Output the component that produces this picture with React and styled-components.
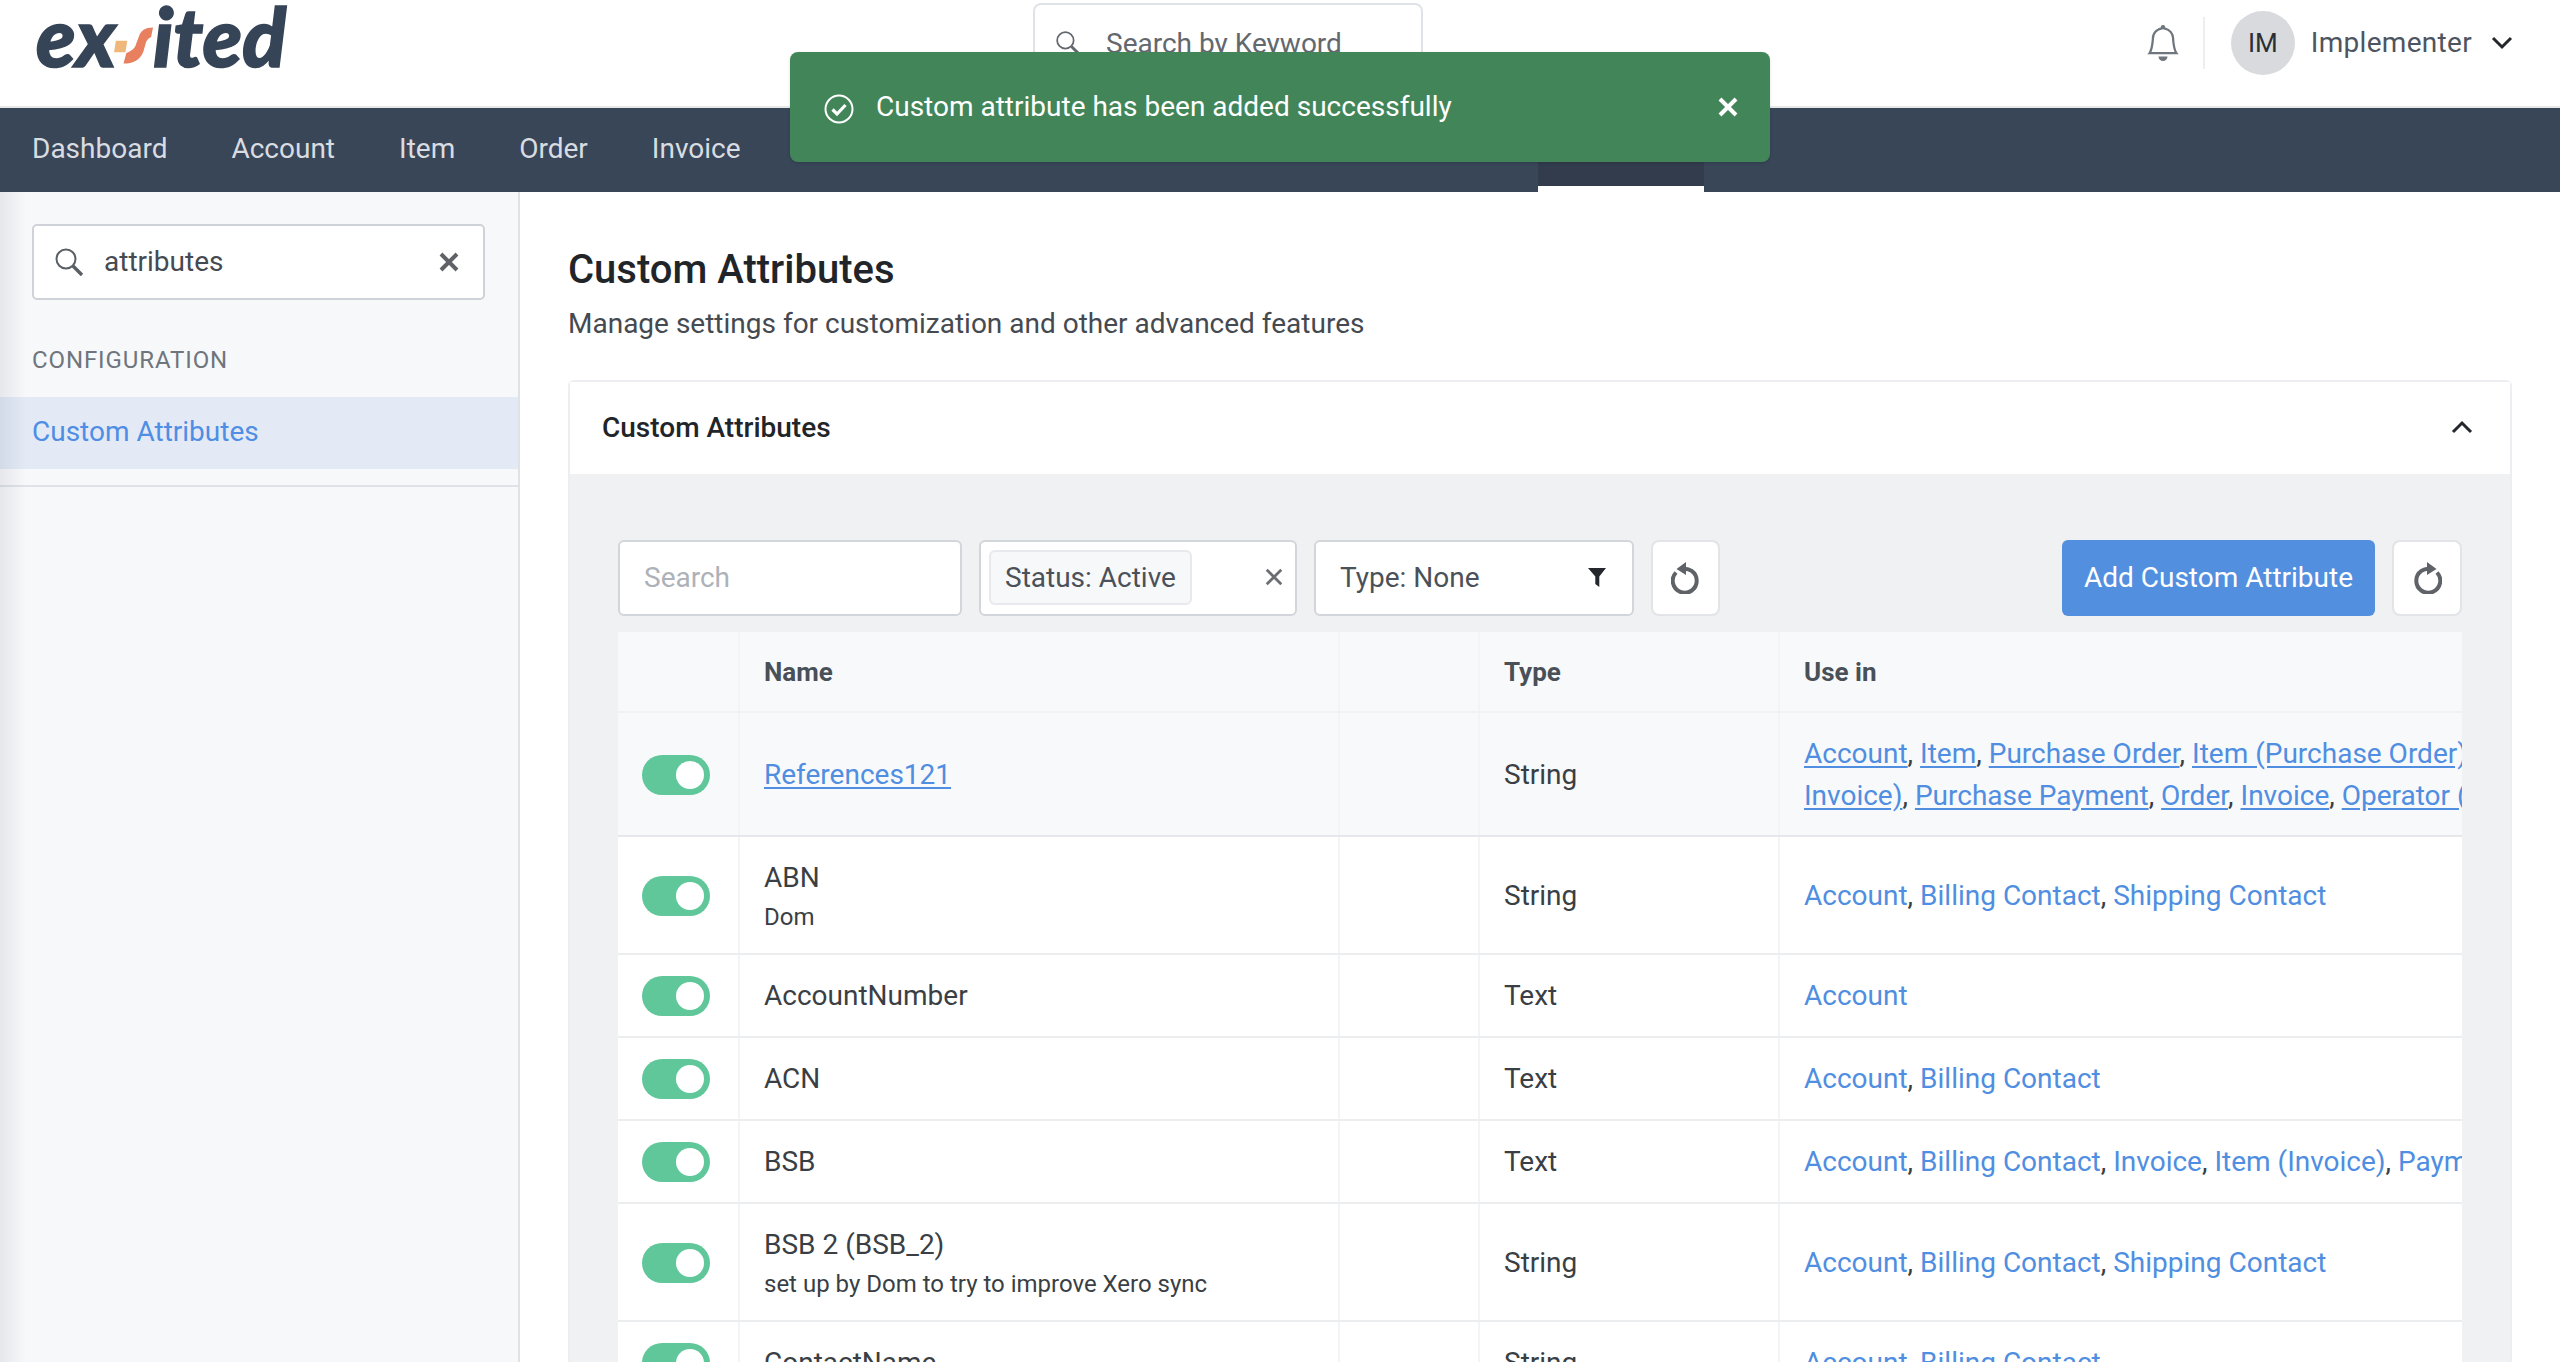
import styled, { createGlobalStyle } from 'styled-components';
import { BsBell } from 'react-icons/bs';

const GlobalStyle = createGlobalStyle`
    html, body {
        margin: 0;
        height: 1362px;
        overflow: hidden;
        background: #fff;
        font-family: Roboto, "Liberation Sans", sans-serif;
        color: #212529;
    }
    * { box-sizing: border-box; }
`;

const Page = styled.div`
    position: relative;
    width: 2560px;
    height: 1362px;
    overflow: hidden;
`;

const Header = styled.header`
    height: 108px;
    display: flex;
    align-items: flex-start;
    border-bottom: 2px solid #e7e8ea;
    padding-left: 36px;
`;

const Logo = styled.div`
    display: flex;
    align-items: flex-start;
    height: 70px;
    width: 252px;
    flex: none;
    padding-top: 1px;
`;

const LogoWord = styled.span`
    font-family: Lato, sans-serif;
    font-weight: 900;
    font-style: italic;
    font-size: 81px;
    line-height: 70px;
    height: 70px;
    color: #364457;
    -webkit-text-stroke: 1.5px #364457;
`;

const KeywordSearch = styled.div`
    margin: 3px 0 0 745px;
    width: 390px;
    height: 80px;
    flex: none;
    display: flex;
    align-items: center;
    gap: 25px;
    padding-left: 20px;
    border: 2px solid #dfe2e6;
    border-radius: 8px;
    font-size: 28px;
    color: #63686f;
`;

const UserArea = styled.div`
    margin-left: auto;
    display: flex;
    align-items: center;
    height: 85px;
    color: #6f767e;
`;

const BellIcon = styled(BsBell)`
    font-size: 36px;
    margin-right: 22px;
`;

const UserDivider = styled.div`
    width: 2px;
    height: 52px;
    background: #eceef0;
    margin-right: 26px;
`;

const Avatar = styled.div`
    width: 64px;
    height: 64px;
    border-radius: 50%;
    background: #d8dade;
    color: #2b2f36;
    font-size: 26px;
    display: flex;
    align-items: center;
    justify-content: center;
    margin-right: 16px;
`;

const UserName = styled.span`
    font-size: 28px;
    color: #4e5560;
    letter-spacing: 0.3px;
    margin-right: 19px;
`;

const UserCaret = styled.svg`
    width: 22px;
    height: 14px;
    margin-right: 47px;
`;

const NavBar = styled.nav`
    height: 84px;
    background: #384658;
    display: flex;
    align-items: stretch;
`;

const NavItem = styled.div`
    padding: 0 32px 3px;
    display: flex;
    align-items: center;
    font-size: 28px;
    color: #d9dce1;
`;

const ActiveTab = styled.div`
    width: 166px;
    margin-left: 765px;
    height: 84px;
    background: #323c4c;
    border-bottom: 6px solid #fff;
`;

const Toast = styled.div`
    position: absolute;
    left: 790px;
    top: 52px;
    width: 980px;
    height: 110px;
    border-radius: 8px;
    background: #428558;
    color: #fff;
    display: flex;
    align-items: center;
    padding: 0 31px 0 34px;
    font-size: 28px;
    box-shadow: 0 1px 3px rgba(0, 0, 0, 0.15);
`;

const ToastMessage = styled.span`
    flex: 1;
    margin-left: 22px;
    padding-bottom: 2px;
`;

const Body = styled.div`
    display: flex;
    height: 1170px;
`;

const Sidebar = styled.aside`
    position: relative;
    width: 520px;
    flex: none;
    background: #f7f8fa;
    border-right: 2px solid #dfe2e7;
    padding-top: 32px;

    &::after {
        content: '';
        position: absolute;
        left: 0;
        top: 0;
        bottom: 0;
        width: 26px;
        background: linear-gradient(to right, rgba(70, 80, 100, 0.1), rgba(70, 80, 100, 0));
        pointer-events: none;
    }
`;

const SideSearch = styled.div`
    margin: 0 33px 0 32px;
    height: 76px;
    background: #fff;
    border: 2px solid #cfd3d9;
    border-radius: 5px;
    display: flex;
    align-items: center;
    padding: 0 23px 0 20px;
    gap: 20px;
    font-size: 28px;
    color: #454a50;
`;

const SideSearchText = styled.span`
    flex: 1;
    padding-bottom: 1px;
`;

const SideHeading = styled.div`
    margin: 42px 33px 0 32px;
    height: 36px;
    line-height: 36px;
    font-size: 24px;
    color: #6e757d;
    letter-spacing: 0.9px;
`;

const SideLink = styled.div`
    margin-top: 19px;
    height: 72px;
    background: #e3eaf6;
    padding: 0 0 3px 32px;
    display: flex;
    align-items: center;
    font-size: 28px;
    color: #4f8ee4;
`;

const SideRule = styled.div`
    margin-top: 16px;
    height: 2px;
    background: #dfe2e8;
`;

const Main = styled.main`
    flex: 1;
    min-width: 0;
    padding: 51px 48px 0 48px;
`;

const Title = styled.h1`
    margin: 0;
    font-size: 40px;
    line-height: 54px;
    font-weight: 500;
    color: #212529;
`;

const Subtitle = styled.p`
    margin: 4px 0 0;
    font-size: 28px;
    line-height: 46px;
    color: #454a50;
`;

const Card = styled.section`
    margin-top: 33px;
    border: 2px solid #eceef1;
    border-radius: 6px 6px 0 0;
    background: #f0f1f3;
    height: 1000px;
`;

const CardHead = styled.div`
    height: 92px;
    padding: 0 37px 2px 32px;
    background: #fff;
    display: flex;
    align-items: center;
    justify-content: space-between;
    font-size: 28px;
    font-weight: 500;
    color: #212529;
`;

const CardBody = styled.div`
    padding: 66px 48px 0;
`;

const Toolbar = styled.div`
    display: flex;
    gap: 17px;
    height: 76px;
    margin-bottom: 16px;
`;

const Field = styled.div`
    width: ${({ $w }) => $w}px;
    flex: none;
    background: #fff;
    border: 2px solid #d2d5da;
    border-radius: 6px;
    display: flex;
    align-items: center;
    justify-content: space-between;
    padding: 0 ${({ $pr }) => $pr || 24}px 2px ${({ $pl }) => $pl || 24}px;
    font-size: 28px;
    color: ${({ $muted }) => ($muted ? '#adb2b9' : '#4b5158')};
`;

const Chip = styled.span`
    height: 55px;
    padding: 0 14px;
    display: flex;
    align-items: center;
    background: #f7f8fa;
    border: 2px solid #e7e9ec;
    border-radius: 6px;
`;

const IconButton = styled.button`
    width: ${({ $w }) => $w}px;
    flex: none;
    padding: 0;
    background: #fff;
    border: 2px solid #e2e4e8;
    border-radius: 8px;
    display: flex;
    align-items: center;
    justify-content: center;
`;

const AddButton = styled.button`
    margin-left: auto;
    width: 313px;
    flex: none;
    padding: 0 0 2px;
    background: #528fdf;
    border: none;
    border-radius: 6px;
    color: #fff;
    font-family: inherit;
    font-size: 28px;
`;

const Table = styled.div`
    overflow: hidden;
    height: 900px;
    background: #fff;
`;

const Row = styled.div`
    display: grid;
    grid-template-columns: 120px 600px 140px 300px 684px;
    height: ${({ $h }) => $h}px;
    background: ${({ $tint }) => ($tint ? '#f8f9fb' : '#fff')};
    border-bottom: 2px solid ${({ $line }) => $line || '#ecedef'};
`;

const Cell = styled.div`
    display: flex;
    flex-direction: column;
    justify-content: center;
    min-width: 0;
    overflow: hidden;
    padding: 1px 0 0 24px;
    border-left: ${({ $first }) => ($first ? 'none' : '2px solid #f3f4f6')};
    font-size: 28px;
    line-height: 42px;
    color: #3a3f45;
    white-space: nowrap;
`;

const HeadCell = styled(Cell)`
    padding-top: 0;
    font-size: 26px;
    font-weight: 700;
    color: #495057;
`;

const SubName = styled.div`
    font-size: 24px;
    line-height: 36px;
    color: #3a3f45;
`;

const NameLink = styled.span`
    color: #4f8ee0;
    text-decoration: ${({ $u }) => ($u ? 'underline' : 'none')};
    text-underline-offset: 3px;
`;

const Toggle = styled.div`
    width: 68px;
    height: 40px;
    border-radius: 20px;
    background: #60c79a;
    display: flex;
    align-items: center;
    justify-content: flex-end;
    padding-right: 6px;

    &::after {
        content: '';
        width: 28px;
        height: 28px;
        border-radius: 50%;
        background: #fff;
    }
`;

const SearchIcon = ({ size = 30, color = '#5a5f65' }) => (
    <svg width={size} height={size} viewBox="0 0 30 30" fill="none" style={{ flex: 'none' }}>
        <circle cx="12" cy="12" r="9.5" stroke={color} strokeWidth="2" />
        <path d="M19 19l9 9" stroke={color} strokeWidth="3.4" />
    </svg>
);

const CloseIcon = ({ size = 22, color = '#5f6368', weight = 4 }) => (
    <svg width={size} height={size} viewBox="0 0 22 22" fill="none" style={{ flex: 'none' }}>
        <path d="M3 3l16 16M19 3L3 19" stroke={color} strokeWidth={weight} />
    </svg>
);

const CheckIcon = () => (
    <svg width="30" height="30" viewBox="0 0 30 30" fill="none" style={{ flex: 'none', marginTop: 4 }}>
        <circle cx="15" cy="15" r="13.5" stroke="#fff" strokeWidth="2" />
        <path d="M8.5 15.5l4.5 4.5 8.5-9" stroke="#fff" strokeWidth="3.2" />
    </svg>
);

const FunnelIcon = () => (
    <svg width="18" height="19" viewBox="0 0 18 19" style={{ flex: 'none' }}>
        <path d="M0 0h18l-6.7 8.4V19l-4-3V8.4z" fill="#24272c" />
    </svg>
);

const ResetIcon = ({ flip }) => (
    <svg width="30" height="32" viewBox="0 0 30 32" fill="none" style={flip ? { transform: 'scaleX(-1)' } : undefined}>
        <path d="M9.5 7.5A12 12 0 1 1 5 10.5" stroke="#5f6266" strokeWidth="4" />
        <path d="M15 0v13L5.5 7z" fill="#5f6266" />
    </svg>
);

const links = [
    ['Account', 'Billing Contact', 'Shipping Contact'],
    ['Account'],
    ['Account', 'Billing Contact'],
    ['Account', 'Billing Contact', 'Invoice', 'Item (Invoice)', 'Payment'],
];

const rows = [
    { h: 118, name: 'ABN', sub: 'Dom', type: 'String', uses: links[0] },
    { h: 83, name: 'AccountNumber', type: 'Text', uses: links[1] },
    { h: 83, name: 'ACN', type: 'Text', uses: links[2] },
    { h: 83, name: 'BSB', type: 'Text', uses: links[3] },
    { h: 118, name: 'BSB 2 (BSB_2)', sub: 'set up by Dom to try to improve Xero sync', type: 'String', uses: links[0] },
    { h: 83, name: 'ContactName', type: 'String', uses: links[2] },
];

const UseLine = ({ items, underline }) => (
    <div>
        {items.map((item, i) => (
            <span key={item + i}>
                <NameLink $u={underline}>{item}</NameLink>
                {i < items.length - 1 && ', '}
            </span>
        ))}
    </div>
);

export default function App() {
    return (
        <Page>
            <GlobalStyle />
            <Header>
                <Logo>
                    <LogoWord>ex</LogoWord>
                    <svg width="39" height="70" viewBox="0 0 41 70" style={{ flex: 'none', marginLeft: -2 }}>
                        <path d="M2 40h12l-2 12H0z" fill="#f0b77a" />
                        <path d="M41 26C33 26 28 29 26 36L23 44C22 48 18 51 13 53L10 64C20 64 28 60 31 51L33 44C34 39 37 37 39 36Z" fill="#e8805f" />
                    </svg>
                    <LogoWord>ited</LogoWord>
                </Logo>
                <KeywordSearch>
                    <SearchIcon size={26} color="#63686f" />
                    Search by Keyword
                </KeywordSearch>
                <UserArea>
                    <BellIcon />
                    <UserDivider />
                    <Avatar>IM</Avatar>
                    <UserName>Implementer</UserName>
                    <UserCaret viewBox="0 0 22 14" fill="none">
                        <path d="M2 2l9 9 9-9" stroke="#24272c" strokeWidth="3" />
                    </UserCaret>
                </UserArea>
            </Header>
            <NavBar>
                <NavItem>Dashboard</NavItem>
                <NavItem>Account</NavItem>
                <NavItem>Item</NavItem>
                <NavItem>Order</NavItem>
                <NavItem>Invoice</NavItem>
                <ActiveTab />
            </NavBar>
            <Toast>
                <CheckIcon />
                <ToastMessage>Custom attribute has been added successfully</ToastMessage>
                <CloseIcon size={22} color="#fff" />
            </Toast>
            <Body>
                <Sidebar>
                    <SideSearch>
                        <SearchIcon />
                        <SideSearchText>attributes</SideSearchText>
                        <CloseIcon />
                    </SideSearch>
                    <SideHeading>CONFIGURATION</SideHeading>
                    <SideLink>Custom Attributes</SideLink>
                    <SideRule />
                </Sidebar>
                <Main>
                    <Title>Custom Attributes</Title>
                    <Subtitle>Manage settings for customization and other advanced features</Subtitle>
                    <Card>
                        <CardHead>
                            Custom Attributes
                            <svg width="22" height="14" viewBox="0 0 22 14" fill="none">
                                <path d="M2 12l9-9 9 9" stroke="#24272c" strokeWidth="3" />
                            </svg>
                        </CardHead>
                        <CardBody>
                            <Toolbar>
                                <Field $w={344} $muted>Search</Field>
                                <Field $w={318} $pl={8} $pr={11}>
                                    <Chip>Status: Active</Chip>
                                    <CloseIcon size={20} color="#6a6e73" weight={3} />
                                </Field>
                                <Field $w={320} $pr={26}>
                                    Type: None
                                    <FunnelIcon />
                                </Field>
                                <IconButton $w={69}><ResetIcon /></IconButton>
                                <AddButton>Add Custom Attribute</AddButton>
                                <IconButton $w={70}><ResetIcon flip /></IconButton>
                            </Toolbar>
                            <Table>
                                <Row $h={81} $tint $line="#f1f2f4">
                                    <HeadCell $first />
                                    <HeadCell>Name</HeadCell>
                                    <HeadCell />
                                    <HeadCell>Type</HeadCell>
                                    <HeadCell>Use in</HeadCell>
                                </Row>
                                <Row $h={124} $tint $line="#e6e7ea">
                                    <Cell $first><Toggle /></Cell>
                                    <Cell><div><NameLink $u>References121</NameLink></div></Cell>
                                    <Cell />
                                    <Cell>String</Cell>
                                    <Cell>
                                        <UseLine underline items={['Account', 'Item', 'Purchase Order', 'Item (Purchase Order)']} />
                                        <UseLine underline items={['Invoice)', 'Purchase Payment', 'Order', 'Invoice', 'Operator (']} />
                                    </Cell>
                                </Row>
                                {rows.map((row) => (
                                    <Row key={row.name} $h={row.h}>
                                        <Cell $first><Toggle /></Cell>
                                        <Cell>
                                            {row.name}
                                            {row.sub && <SubName>{row.sub}</SubName>}
                                        </Cell>
                                        <Cell />
                                        <Cell>{row.type}</Cell>
                                        <Cell><UseLine items={row.uses} /></Cell>
                                    </Row>
                                ))}
                            </Table>
                        </CardBody>
                    </Card>
                </Main>
            </Body>
        </Page>
    );
}
